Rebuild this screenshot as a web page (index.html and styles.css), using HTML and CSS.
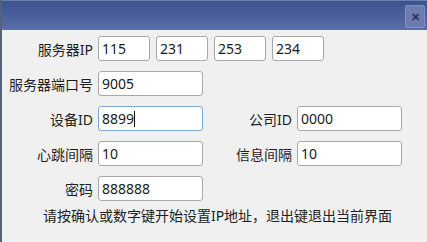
FILE: index.html
```html
<!DOCTYPE html>
<html lang="zh-CN">
<head>
  <meta charset="UTF-8" />
  <title>IP设置</title>
  <link rel="stylesheet" href="styles.css">
</head>
<body>

<div class="window">
  <div class="titlebar">
    <div class="close">&#x2715;</div>
  </div>

  <div class="content">
    <div class="grid">
      <label>服务器IP</label>
      <div class="ip-row">
        <div class="field short">115</div>
        <div class="field short">231</div>
        <div class="field short">253</div>
        <div class="field short">234</div>
      </div>

      <label>服务器端口号</label>
      <div class="field">9005</div>
      <span></span><span></span>

      <label>设备ID</label>
      <div class="field focus">8899<span class="caret"></span></div>
      <label>公司ID</label>
      <div class="field">0000</div>

      <label>心跳间隔</label>
      <div class="field">10</div>
      <label>信息间隔</label>
      <div class="field">10</div>

      <label>密码</label>
      <div class="field">888888</div>
      <span></span><span></span>
    </div>

    <p class="hint">请按确认或数字键开始设置IP地址，退出键退出当前界面</p>
  </div>
</div>

</body>
</html>
```

FILE: styles.css
```css
body {
  margin: 0;
  padding: 0;
  font-family: "Noto Sans", "Noto Sans CJK SC", sans-serif;
  background: #f0f0f0;
  color: #1e1e1e;
}
.window {
  width: 427px;
  height: 242px;
  box-sizing: border-box;
  border-left: 2px solid #55607a;
  background: #f0f0f0;
}
.titlebar {
  height: 30px;
  background: linear-gradient(#3c528f, #5a6ea7);
  border-top: 1px solid #6f7fae;
  box-sizing: border-box;
  display: flex;
  justify-content: flex-end;
  align-items: center;
  padding-right: 2px;
}
.close {
  width: 20px;
  height: 23px;
  margin-top: 2px;
  background: #6c7bb0;
  border: 1px solid #8290bd;
  border-radius: 2px;
  box-sizing: border-box;
  color: #2b3048;
  font-size: 11px;
  font-weight: bold;
  display: flex;
  align-items: center;
  justify-content: center;
}
.content {
  padding-top: 6px;
}
.grid {
  display: grid;
  grid-template-columns: 91px 105px 84px 105px;
  grid-auto-rows: 25px;
  column-gap: 5px;
  row-gap: 10px;
}
.grid label {
  font-size: 14px;
  text-align: right;
  align-self: center;
  white-space: nowrap;
}
.ip-row {
  grid-column: 2 / 5;
  display: flex;
  gap: 6px;
}
.field {
  height: 25px;
  box-sizing: border-box;
  background: #fff;
  border: 1px solid #a8a8a8;
  border-radius: 3px;
  font-size: 14px;
  line-height: 23px;
  padding-left: 3px;
  color: #1a1a1a;
}
.field.short {
  width: 52px;
}
.field.focus {
  border-color: #7fa6d8;
}
.caret {
  display: inline-block;
  width: 1px;
  height: 16px;
  background: #111;
  vertical-align: -3px;
}
.hint {
  margin: 5px 0 0;
  font-size: 14px;
  line-height: 20px;
  text-align: center;
  padding-left: 6px;
}
```
